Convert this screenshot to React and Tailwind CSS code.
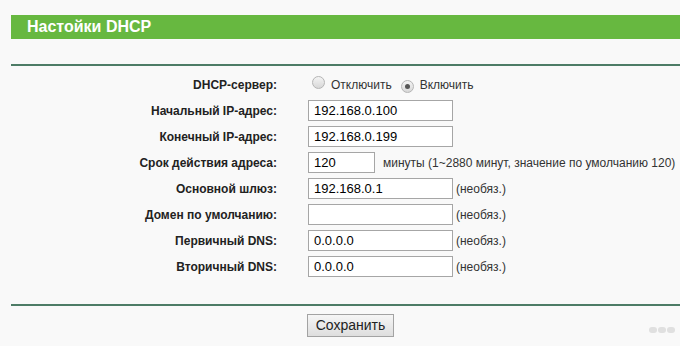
import React from "react";

const font = { fontFamily: '"Liberation Sans", Arial, sans-serif' };

function Radio({ checked }) {
  return (
    <span className="relative inline-flex h-[13px] w-[13px] items-center justify-center rounded-full border border-[#b5b5b5] bg-gradient-to-b from-[#f4f4f4] to-[#d8d8d8]">
      {checked && <span className="h-[5px] w-[5px] rounded-full bg-[#555]" />}
    </span>
  );
}

function Row({ label, children }) {
  return (
    <div className="flex h-[21px] items-center">
      <div className="w-[266px] text-right text-[12px] font-bold text-[#222]">{label}</div>
      <div className="ml-[31px] flex items-center">{children}</div>
    </div>
  );
}

function Field({ value, w = "w-[145px]" }) {
  return (
    <div className={`${w} flex h-[21px] items-center border border-[#a6a6a6] bg-white pl-[5px] text-[13px] text-black`}>
      {value}
    </div>
  );
}

function Note({ children }) {
  return <span className="ml-[3px] text-[12px] text-[#333]">{children}</span>;
}

export default function App() {
  return (
    <div className="h-[346px] w-[680px] overflow-hidden bg-[#f9f9f9] pl-[11px] pt-[15px]" style={font}>
      <div className="flex h-[24px] items-center bg-[#67b840] pl-[16px] text-[16px] font-bold text-white">
        Настойки DHCP
      </div>
      <div className="mt-[25px] h-[2px] bg-[#4d7c66]" />
      <div className="mt-[8px] flex flex-col gap-[5px]">
        <Row label="DHCP-сервер:">
          <div className="flex items-center text-[12px] text-[#333]">
            <span className="ml-[4px]"><Radio /></span>
            <span className="ml-[6px]">Отключить</span>
            <span className="ml-[9px]"><Radio checked /></span>
            <span className="ml-[6px]">Включить</span>
          </div>
        </Row>
        <Row label="Начальный IP-адрес:">
          <Field value="192.168.0.100" />
        </Row>
        <Row label="Конечный IP-адрес:">
          <Field value="192.168.0.199" />
        </Row>
        <Row label="Срок действия адреса:">
          <Field value="120" w="w-[67px]" />
          <span className="ml-[8px] text-[12px] text-[#333]">минуты (1~2880 минут, значение по умолчанию 120)</span>
        </Row>
        <Row label="Основной шлюз:">
          <Field value="192.168.0.1" />
          <Note>(необяз.)</Note>
        </Row>
        <Row label="Домен по умолчанию:">
          <Field value="" />
          <Note>(необяз.)</Note>
        </Row>
        <Row label="Первичный DNS:">
          <Field value="0.0.0.0" />
          <Note>(необяз.)</Note>
        </Row>
        <Row label="Вторичный DNS:">
          <Field value="0.0.0.0" />
          <Note>(необяз.)</Note>
        </Row>
      </div>
      <div className="mt-[27px] h-[2px] bg-[#4d7c66]" />
      <div className="relative mt-[8px] flex">
        <button className="ml-[296px] flex h-[23px] w-[87px] items-center justify-center border border-[#a3a3a3] bg-gradient-to-b from-[#f6f6f6] to-[#dedede] text-[14px] text-[#222]">
          Сохранить
        </button>
        <div className="absolute left-[638px] top-[13px] flex gap-[1px] opacity-70">
          <span className="h-[6px] w-[8px] rounded-full bg-[#d6d6d6]" />
          <span className="h-[6px] w-[8px] rounded-full bg-[#d6d6d6]" />
          <span className="h-[6px] w-[8px] rounded-full bg-[#d6d6d6]" />
        </div>
      </div>
    </div>
  );
}
